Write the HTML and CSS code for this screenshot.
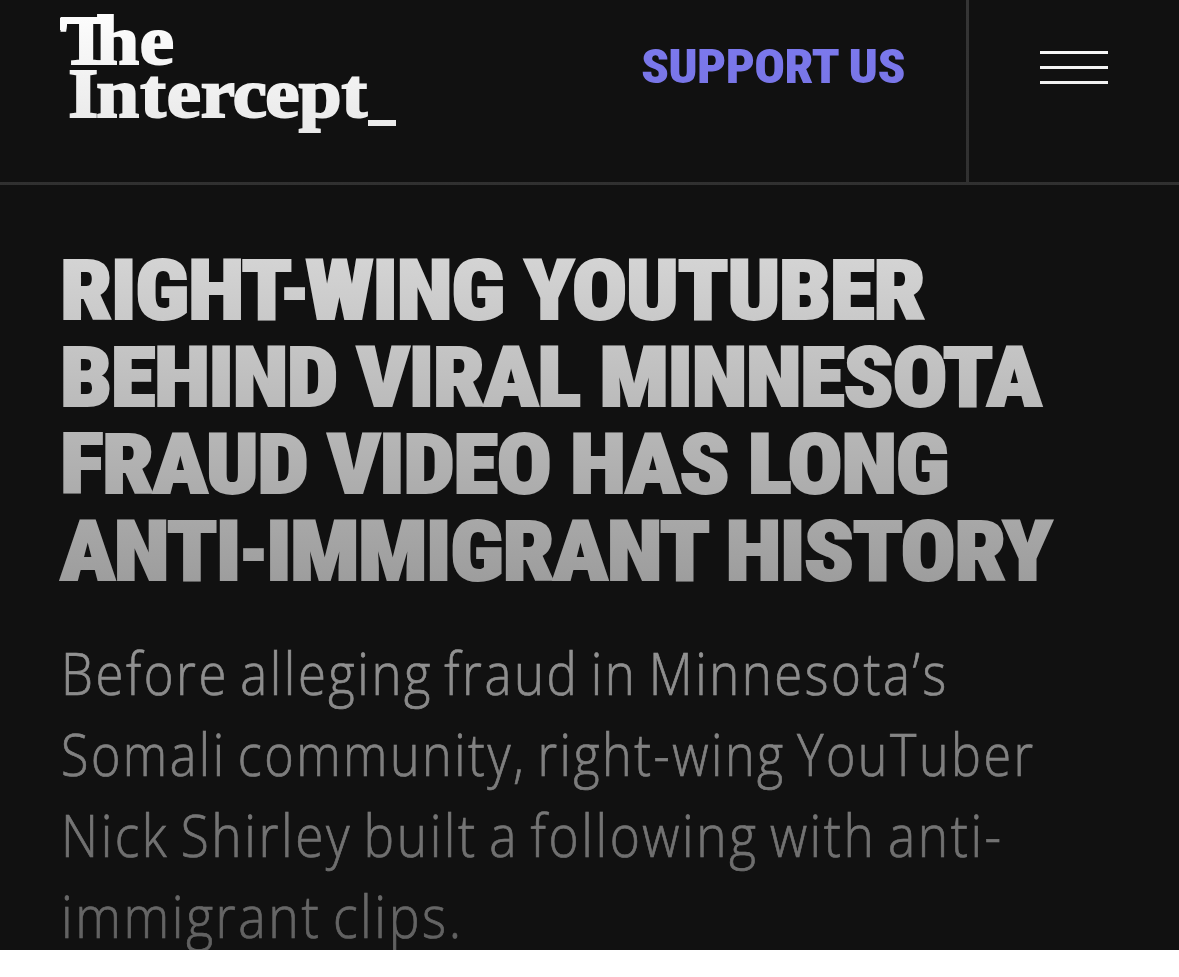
FILE: index.html
```html
<!DOCTYPE html>
<html lang="en">
<head>
    <meta charset="UTF-8">
    <meta name="viewport" content="width=device-width, initial-scale=1.0">
    <title>The Intercept</title>
    <link rel="stylesheet" href="styles.css">
</head>
<body>

    <div class="page">
        <header class="header">
            <a class="logo" href="#">
                <svg width="350" height="130" viewBox="0 0 350 130" aria-label="The Intercept">
                    <g transform="scale(1.1 1)">
                        <text class="logo-text" y="64.5" x="0.5 33 72.5">The</text>
                        <text class="logo-text" y="117" x="7.5 33 73 97 128 157 186.5 217 256">Intercept</text>
                    </g>
                    <path d="M0 18h40l12-4v10H7l-1 6H0z" fill="#fff"/>
                    <rect x="308" y="120" width="28" height="6" fill="#fff"/>
                </svg>
            </a>
            <a class="support" href="#">SUPPORT US</a>
            <button class="menu-btn" aria-label="Menu">
                <span class="bar"></span>
                <span class="bar"></span>
                <span class="bar"></span>
            </button>
        </header>

        <main class="article">
            <h1 class="title">
                <span class="line">RIGHT<span class="dash tight">-</span>WING YOUTUBER</span>
                <span class="line">BEHIND VIRAL MINNESOTA</span>
                <span class="line">FRAUD VIDEO HAS LONG</span>
                <span class="line">ANTI<span class="dash">-</span>IMMIGRANT HISTORY</span>
            </h1>
            <p class="dek">
                <span class="line">Before alleging fraud in Minnesota’s</span>
                <span class="line">Somali community, right-wing YouTuber</span>
                <span class="line">Nick Shirley built a following with anti-</span>
                <span class="line">immigrant clips.</span>
            </p>
        </main>
        <div class="fade"></div>
    </div>

</body>
</html>
```
FILE: styles.css
```css
body {
    margin: 0;
    background-color: white;
}
.page {
    position: relative;
    height: 950px;
    overflow: hidden;
    background-color: #111;
    color: white;
}
.header {
    display: flex;
    height: 182px;
    border-bottom: 3px solid #353535;
}
.logo {
    flex: 1;
    padding-left: 60px;
}
.logo svg {
    display: block;
    overflow: visible;
}
.logo-text {
    font-family: "Liberation Serif", serif;
    font-weight: bold;
    font-size: 70px;
    fill: white;
    stroke: white;
    stroke-width: 2px;
}
.support {
    margin-right: 61px;
    padding-top: 40px;
    font-family: Roboto, sans-serif;
    font-size: 48px;
    font-weight: 900;
    font-stretch: 75%;
    letter-spacing: -0.7px;
    line-height: 54px;
    color: #7f7cf4;
    text-decoration: none;
    white-space: nowrap;
    transform: scaleX(1.065);
    transform-origin: right;
}
.menu-btn {
    display: flex;
    flex-direction: column;
    gap: 12px;
    box-sizing: border-box;
    width: 213px;
    padding: 51px 71px 0;
    background: none;
    border: none;
    border-left: 3px solid #353535;
}
.bar {
    width: 68px;
    height: 3px;
    background-color: white;
}
.article {
    padding: 62px 60px 0;
}
.line {
    display: block;
    white-space: nowrap;
    transform-origin: left;
}
.title {
    margin: 0;
    font-family: Roboto, sans-serif;
    font-size: 84px;
    font-weight: 900;
    font-stretch: 75%;
    letter-spacing: -1.5px;
    line-height: 87px;
    -webkit-text-stroke: 2px white;
}
.title .line {
    transform: scaleX(1.1);
}
.title .line:nth-child(2),
.title .line:nth-child(3) {
    transform: scaleX(1.095);
}
.title .line:nth-child(4) {
    transform: scaleX(1.091);
}
.dash {
    display: inline-block;
    margin: 0 -5px 0 -5px;
    transform: scaleX(0.8);
}
.dash.tight {
    margin: 0 -7px 0 -14px;
}
.dek {
    margin: 37px 0 0;
    padding-left: 1px;
    font-family: "Open Sans", sans-serif;
    font-size: 58px;
    font-weight: 300;
    letter-spacing: 2.9px;
    word-spacing: -5px;
    line-height: 81px;
    -webkit-text-stroke: 0.7px white;
}
.dek .line {
    transform: scaleX(0.877);
}
.dek .line:nth-child(2) {
    transform: scaleX(0.866);
}
.dek .line:nth-child(3) {
    transform: scaleX(0.886);
}
.dek .line:nth-child(4) {
    transform: scaleX(0.892);
}
.fade {
    position: absolute;
    inset: 0;
    background: linear-gradient(rgba(17, 17, 17, 0), rgba(17, 17, 17, 0.67));
    pointer-events: none;
}
```
